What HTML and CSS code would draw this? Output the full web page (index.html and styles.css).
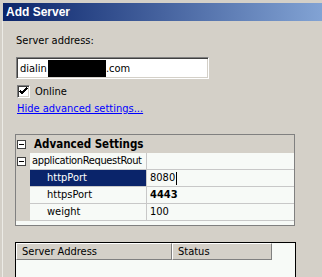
FILE: index.html
```html
<!DOCTYPE html>
<html>
<head>
<meta charset="utf-8">
<link rel="stylesheet" href="styles.css">
</head>
<body>
<div class="window">
  <div class="titlebar">Add Server</div>
  <div class="content">
    <div class="label">Server address:</div>
    <div class="textbox"><span>dialin</span><span class="redact"></span><span>.com</span></div>
    <div class="check">
      <span class="checkbox"><svg width="9" height="9" viewBox="0 0 9 9"><path d="M1 4 L3 6 L8 1" fill="none" stroke="#000" stroke-width="2" shape-rendering="crispEdges"/></svg></span>
      <span class="check-label">Online</span>
    </div>
    <a class="link" href="#">Hide advanced settings...</a>
    <div class="propgrid">
      <div class="category">
        <span class="expander"></span>
        <span class="cat-text">Advanced Settings</span>
      </div>
      <div class="prow">
        <div class="margin"><span class="expander"></span></div>
        <div class="name group-name">applicationRequestRout</div>
        <div class="value"></div>
      </div>
      <div class="prow selected">
        <div class="margin"></div>
        <div class="name child">httpPort</div>
        <div class="value">8080<span class="caret"></span></div>
      </div>
      <div class="prow">
        <div class="margin"></div>
        <div class="name child">httpsPort</div>
        <div class="value bold">4443</div>
      </div>
      <div class="prow">
        <div class="margin"></div>
        <div class="name child">weight</div>
        <div class="value">100</div>
      </div>
    </div>
    <div class="listview">
      <div class="lv-header">
        <div class="col c1">Server Address</div>
        <div class="col c2">Status</div>
      </div>
    </div>
  </div>
</div>
</body>
</html>
```

FILE: styles.css
```css
html, body {
  margin: 0;
  padding: 0;
  background: #d4d0c8;
  overflow: hidden;
}
body {
  font-family: "DejaVu Sans Condensed", "Liberation Sans", Arial, sans-serif;
  font-size: 11px;
  color: #000;
}
.window {
  padding-top: 3px;
  padding-left: 2px;
  width: 320px;
  height: 274px;
}
.titlebar {
  margin-left: 1px;
  height: 18px;
  line-height: 18px;
  padding-left: 3px;
  color: #fff;
  font-family: "Liberation Sans", Arial, sans-serif;
  font-weight: bold;
  font-size: 12px;
  background: linear-gradient(to right, #0a246a 0%, #46639f 50%, #82a3d4 100%);
}
.content {
  border-left: 1px solid #ecebe6;
  padding-left: 13px;
  height: 256px;
}
.label {
  padding-top: 13px;
  line-height: 14px;
}
.textbox {
  margin-top: 9px;
  width: 193px;
  height: 22px;
  box-sizing: border-box;
  background: #fff;
  border-top: 1px solid #808080;
  border-left: 1px solid #808080;
  border-right: 1px solid #fff;
  border-bottom: 1px solid #fff;
  box-shadow: inset 1px 1px 0 #404040, inset -1px -1px 0 #d4d0c8;
  display: flex;
  align-items: center;
  padding-left: 3px;
}
.redact {
  display: inline-block;
  width: 58px;
  height: 17px;
  background: #000;
  margin-left: 1px;
}
.check {
  margin-top: 6px;
  margin-left: 1px;
  display: flex;
  align-items: center;
  height: 13px;
}
.checkbox {
  width: 13px;
  height: 13px;
  box-sizing: border-box;
  background: #fff;
  border-top: 1px solid #808080;
  border-left: 1px solid #808080;
  border-right: 1px solid #fff;
  border-bottom: 1px solid #fff;
  box-shadow: inset 1px 1px 0 #404040, inset -1px -1px 0 #d4d0c8;
  display: flex;
  align-items: center;
  justify-content: center;
}
.checkbox svg {
  display: block;
}
.check-label {
  margin-left: 5px;
  line-height: 13px;
}
.link {
  display: block;
  margin-top: 4px;
  margin-left: 1px;
  line-height: 14px;
  color: #0000ff;
  text-decoration: underline;
  width: max-content;
}
.propgrid {
  margin-top: 18px;
  margin-left: -1px;
  width: 280px;
  box-sizing: border-box;
  border: 1px solid #808080;
  background: #f7faf7;
  padding-bottom: 4px;
}
.category {
  height: 18px;
  background: #d4d0c8;
  display: flex;
  align-items: center;
}
.category .expander {
  margin-left: 1px;
}
.cat-text {
  margin-left: 8px;
  font-weight: bold;
  font-size: 11.5px;
}
.expander {
  display: inline-block;
  width: 9px;
  height: 9px;
  box-sizing: border-box;
  border: 1px solid #404040;
  background: #fff;
  position: relative;
}
.expander::after {
  content: "";
  position: absolute;
  left: 1px;
  top: 3px;
  width: 5px;
  height: 1px;
  background: #000;
}
.prow {
  display: flex;
  height: 17px;
}
.margin {
  width: 14px;
  flex: none;
  background: #d4d0c8;
  display: flex;
  align-items: center;
}
.margin .expander {
  margin-left: 1px;
}
.name {
  width: 117px;
  flex: none;
  box-sizing: border-box;
  border-bottom: 1px solid #c8c8c8;
  border-right: 1px solid #c8c8c8;
  padding-left: 3px;
  line-height: 16px;
  white-space: nowrap;
  overflow: hidden;
}
.group-name {
  letter-spacing: -0.35px;
  padding-left: 2px;
}
.name.child {
  padding-left: 17px;
}
.value {
  flex: 1;
  box-sizing: border-box;
  border-bottom: 1px solid #c8c8c8;
  padding-left: 3px;
  line-height: 16px;
  display: flex;
  align-items: center;
}
.value.bold {
  font-weight: bold;
}
.selected .name {
  background: #0a246a;
  color: #fff;
}
.caret {
  display: inline-block;
  width: 1px;
  height: 13px;
  background: #000;
  margin-left: 1px;
}
.listview {
  margin-top: 16px;
  margin-left: -1px;
  width: 281px;
  height: 35px;
  box-sizing: border-box;
  border: 1px solid #000;
  border-bottom: none;
  background: #f7faf7;
}
.lv-header {
  display: flex;
  height: 17px;
}
.col {
  box-sizing: border-box;
  height: 17px;
  background: #d4d0c8;
  border-top: 1px solid #fff;
  border-left: 1px solid #fff;
  border-right: 1px solid #808080;
  border-bottom: 1px solid #808080;
  line-height: 15px;
  padding-left: 5px;
}
.c1 {
  width: 156px;
}
.c2 {
  width: 100px;
}
```
